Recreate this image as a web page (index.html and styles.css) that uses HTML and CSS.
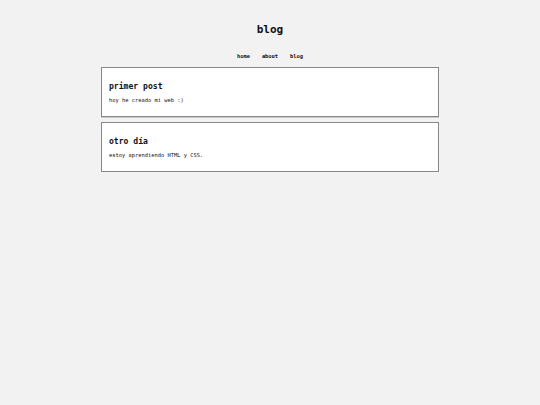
FILE: index.html
```html
<!DOCTYPE html>
<html lang="es">
<head>
<meta charset="utf-8">
<title>blog</title>
<link rel="stylesheet" href="styles.css">
</head>
<body>
<header class="site-header">
  <h1 class="site-title">blog</h1>
  <nav class="site-nav">
    <a href="#">home</a>
    <a href="#">about</a>
    <a href="#">blog</a>
  </nav>
</header>
<main class="posts">
  <article class="post">
    <h2 class="post-title">primer post</h2>
    <p class="post-body">hoy he creado mi web :)</p>
  </article>
  <article class="post">
    <h2 class="post-title">otro día</h2>
    <p class="post-body">estoy aprendiendo HTML y CSS.</p>
  </article>
</main>
</body>
</html>
```
FILE: styles.css
```css
html, body {
  margin: 0;
  padding: 0;
  background: #f2f2f2;
  color: #111;
  font-family: "DejaVu Sans Mono", "Liberation Mono", monospace;
}
.site-header {
  display: flex;
  flex-direction: column;
  align-items: center;
  padding-top: 23px;
}
.site-title {
  margin: 0;
  font-size: 11px;
  line-height: 14px;
  font-weight: bold;
}
.site-nav {
  display: flex;
  gap: 12px;
  margin-top: 15px;
}
.site-nav a {
  font-size: 5.4px;
  line-height: 8px;
  font-weight: bold;
  color: #111;
  text-decoration: none;
}
.posts {
  width: 338px;
  margin: 7px auto 0;
  display: flex;
  flex-direction: column;
  gap: 5px;
}
.post {
  background: #fff;
  border: 1px solid #888;
  box-shadow: 0 1px 0 #c8c8c8;
  padding: 13px 7px 12px;
}
.post-title {
  margin: 0;
  font-size: 8.1px;
  line-height: 10px;
  font-weight: bold;
}
.post-body {
  margin: 6px 0 0;
  font-size: 5.4px;
  line-height: 7px;
}
```
